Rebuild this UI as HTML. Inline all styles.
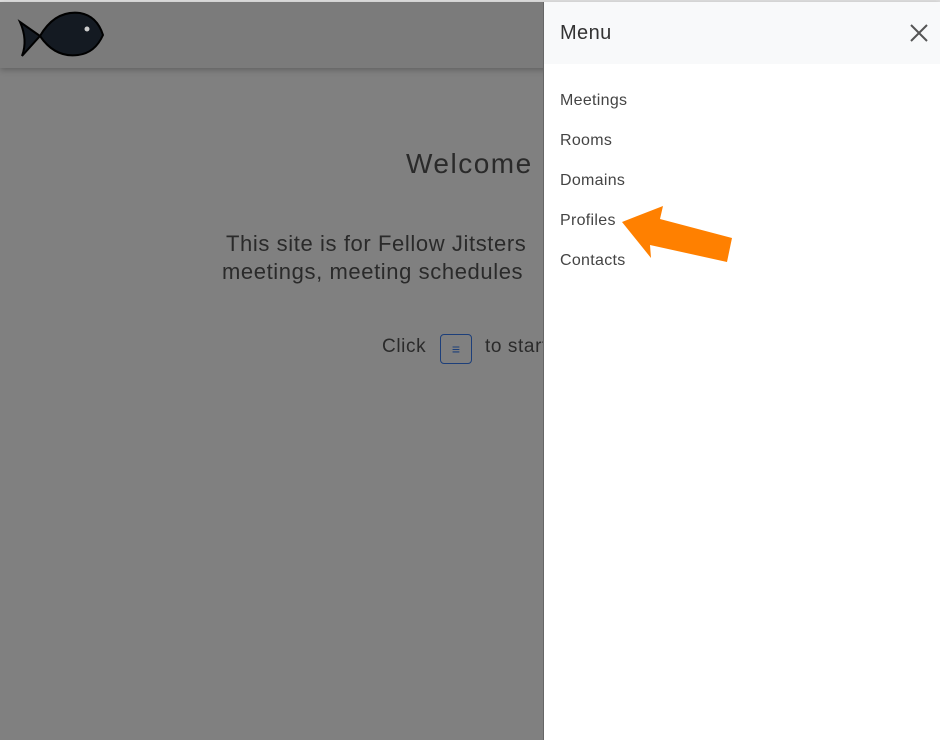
<!DOCTYPE html>
<html><head><style>
body{margin:0;width:940px;height:740px;overflow:hidden;background:#808080;font-family:"Liberation Sans",sans-serif;position:relative}
.hdr{position:absolute;left:0;top:2px;width:940px;height:66px;background:#7b7b7b;box-shadow:0 2px 6px rgba(0,0,0,.25)}
.t{position:absolute;color:#2a2a2a;white-space:nowrap}
.panel{position:absolute;left:543px;top:2px;width:397px;height:738px;background:#fff;border-left:1px solid #666}
.ph{height:62px;background:#f8f9fa;position:relative}
.ph span{position:absolute;left:16px;top:20px;font-size:20px;color:#333;letter-spacing:.4px}
.item{position:absolute;left:16px;font-size:16px;color:#444;letter-spacing:.3px}
</style></head><body>
<div style="position:absolute;left:0;top:0;width:940px;height:2px;background:#e0e0e0"></div>
<div class="hdr"></div>
<svg style="position:absolute;left:0;top:0" width="130" height="70">
<path d="M20 22 L40 36 Q55 10 80 13 Q97 16 103 35 Q95 53 78 55 Q55 58 40 36 L22 56 Q28 40 20 22Z" fill="#141a22" stroke="#000" stroke-width="2"/>
<circle cx="87" cy="29" r="2.5" fill="#ccc"/>
</svg>
<div class="t" style="left:406px;top:148px;font-size:28px;letter-spacing:1.5px">Welcome</div>
<div class="t" style="left:226px;top:231px;font-size:22px;letter-spacing:.6px">This site is for Fellow Jitsters</div>
<div class="t" style="left:222px;top:259px;font-size:22px;letter-spacing:.6px">meetings, meeting schedules</div>
<div class="t" style="left:382px;top:336px;font-size:19px;letter-spacing:.6px">Click</div>
<div style="position:absolute;left:440px;top:334px;width:30px;height:28px;border:1px solid #1d3f7a;border-radius:4px;color:#1d3f7a;text-align:center;line-height:28px;font-size:14px">≡</div>
<div class="t" style="left:485px;top:336px;font-size:19px;letter-spacing:.6px">to start</div>
<div class="panel">
<div class="ph"><span>Menu</span>
<svg style="position:absolute;left:366px;top:22px" width="18" height="18"><path d="M1 1L17 17M17 1L1 17" stroke="#555" stroke-width="2"/></svg></div>
<div class="item" style="top:90px">Meetings</div>
<div class="item" style="top:130px">Rooms</div>
<div class="item" style="top:170px">Domains</div>
<div class="item" style="top:210px">Profiles</div>
<div class="item" style="top:250px">Contacts</div>
</div>
<svg style="position:absolute;left:0;top:0" width="940" height="740"><polygon points="622,222 663,206 660,219 732,238 727,262 650,245 651,258" fill="#ff8000"/></svg>
</body></html>
